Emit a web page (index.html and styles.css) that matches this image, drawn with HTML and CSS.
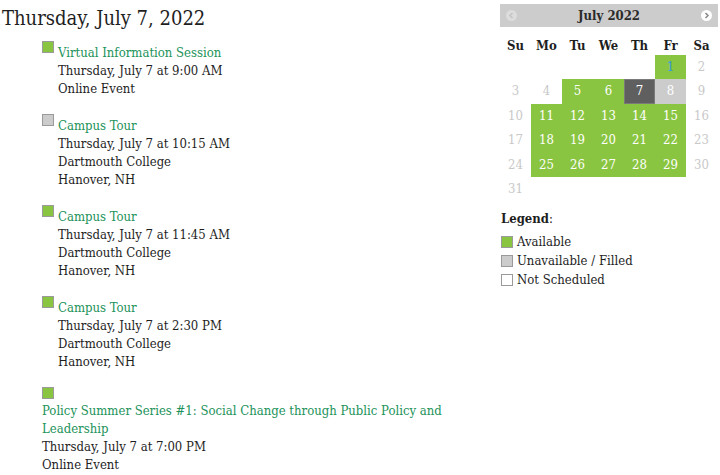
FILE: index.html
```html
<!DOCTYPE html>
<html>
<head>
<meta charset="utf-8">
<link rel="stylesheet" href="styles.css">
</head>
<body>
<div class="page">
  <main class="main">
    <h1 class="day-title">Thursday, July 7, 2022</h1>
    <div class="events">
      <div class="event">
        <span class="swatch swatch-available"></span><div class="details">
          <a class="event-link" href="#">Virtual Information Session</a>
          <div>Thursday, July 7 at 9:00 AM</div>
          <div>Online Event</div>
        </div>
      </div>
      <div class="event">
        <span class="swatch swatch-filled"></span><div class="details">
          <a class="event-link" href="#">Campus Tour</a>
          <div>Thursday, July 7 at 10:15 AM</div>
          <div>Dartmouth College</div>
          <div>Hanover, NH</div>
        </div>
      </div>
      <div class="event">
        <span class="swatch swatch-available"></span><div class="details">
          <a class="event-link" href="#">Campus Tour</a>
          <div>Thursday, July 7 at 11:45 AM</div>
          <div>Dartmouth College</div>
          <div>Hanover, NH</div>
        </div>
      </div>
      <div class="event">
        <span class="swatch swatch-available"></span><div class="details">
          <a class="event-link" href="#">Campus Tour</a>
          <div>Thursday, July 7 at 2:30 PM</div>
          <div>Dartmouth College</div>
          <div>Hanover, NH</div>
        </div>
      </div>
      <div class="event">
        <span class="swatch swatch-available"></span><div class="details">
          <a class="event-link" href="#">Policy Summer Series #1: Social Change through Public Policy and Leadership</a>
          <div>Thursday, July 7 at 7:00 PM</div>
          <div>Online Event</div>
        </div>
      </div>
    </div>
  </main>
  <aside class="side">
    <div class="cal">
      <div class="cal-head">
        <span class="nav nav-prev"><svg width="11" height="11" viewBox="0 0 11 11"><circle cx="5.5" cy="5.5" r="5.5" fill="#dcdcdc"/><path d="M6.5 3 L4 5.5 L6.5 8" fill="none" stroke="#c4c4c4" stroke-width="1.5"/></svg></span>
        <span class="cal-month">July 2022</span>
        <span class="nav nav-next"><svg width="11" height="11" viewBox="0 0 11 11"><circle cx="5.5" cy="5.5" r="5.5" fill="#ffffff"/><path d="M4.5 3 L7 5.5 L4.5 8" fill="none" stroke="#8a8a8a" stroke-width="1.5"/></svg></span>
      </div>
      <div class="cal-grid">
        <div class="dow">Su</div><div class="dow">Mo</div><div class="dow">Tu</div><div class="dow">We</div><div class="dow">Th</div><div class="dow">Fr</div><div class="dow">Sa</div>
        <div class="d"></div><div class="d"></div><div class="d"></div><div class="d"></div><div class="d"></div><div class="d av link">1</div><div class="d off">2</div>
        <div class="d off">3</div><div class="d off">4</div><div class="d av">5</div><div class="d av">6</div><div class="d today">7</div><div class="d na">8</div><div class="d off">9</div>
        <div class="d off">10</div><div class="d av">11</div><div class="d av">12</div><div class="d av">13</div><div class="d av">14</div><div class="d av">15</div><div class="d off">16</div>
        <div class="d off">17</div><div class="d av">18</div><div class="d av">19</div><div class="d av">20</div><div class="d av">21</div><div class="d av">22</div><div class="d off">23</div>
        <div class="d off">24</div><div class="d av">25</div><div class="d av">26</div><div class="d av">27</div><div class="d av">28</div><div class="d av">29</div><div class="d off">30</div>
        <div class="d off">31</div>
      </div>
    </div>
    <div class="legend">
      <div class="legend-title"><b>Legend</b>:</div>
      <div class="legend-item"><span class="swatch swatch-available"></span>Available</div>
      <div class="legend-item"><span class="swatch swatch-filled"></span>Unavailable / Filled</div>
      <div class="legend-item"><span class="swatch swatch-none"></span>Not Scheduled</div>
    </div>
  </aside>
</div>
</body>
</html>
```

FILE: styles.css
```css
* { box-sizing: border-box; }
html, body { margin: 0; padding: 0; background: #fff; }
body {
  font-family: "DejaVu Serif Condensed", "DejaVu Serif", serif;
  font-size: 13px;
  line-height: 18px;
  color: #1e1e1e;
}
.page {
  display: flex;
  justify-content: space-between;
  padding: 0 2px 0 2px;
}
.main { width: 470px; }
.day-title {
  margin: 4px 0 0 0;
  font-size: 20px;
  line-height: 28px;
  font-weight: normal;
}
.events { padding-left: 40px; padding-top: 9px; width: 460px; }
.event { margin-bottom: 16px; font-size: 0; line-height: 0; }
.swatch {
  display: inline-block;
  width: 12px;
  height: 12px;
  border: 1px solid #9a9a9a;
  vertical-align: top;
  margin-right: 4px;
}
.swatch-available { background: #8ac541; }
.swatch-filled { background: #cccccc; }
.swatch-none { background: #ffffff; }
.details {
  display: inline-block;
  vertical-align: top;
  padding-top: 3px;
  font-size: 13px;
  line-height: 18px;
}
.event-link { color: #22925a; text-decoration: none; }

.side { width: 218px; padding-top: 4px; }
.cal-head {
  height: 23px;
  background: #cccccc;
  display: flex;
  align-items: center;
  justify-content: space-between;
  padding: 0 6px;
}
.nav { display: flex; }
.cal-month { font-weight: bold; font-size: 13px; color: #2a2a2a; }
.cal-grid {
  display: grid;
  grid-template-columns: repeat(7, 31px);
  grid-template-rows: 18px;
  grid-auto-rows: 24.4px;
  margin-top: 10px;
}
.dow {
  font-weight: bold;
  text-align: center;
  line-height: 18px;
  color: #1e1e1e;
}
.d {
  text-align: center;
  line-height: 24px;
  color: #ffffff;
}
.d.off { color: #c8c8c8; }
.d.av { background: #8ac541; }
.d.link { color: #3399dd; }
.d.today { background: #5f5f5f; border: 1px solid #7a7a7a; line-height: 22px; }
.d.na { background: #cccccc; }
.legend { margin-top: 9px; padding-left: 1px; }
.legend-title { margin-bottom: 4px; }
.legend-item { line-height: 19px; display: flex; align-items: center; }
```
